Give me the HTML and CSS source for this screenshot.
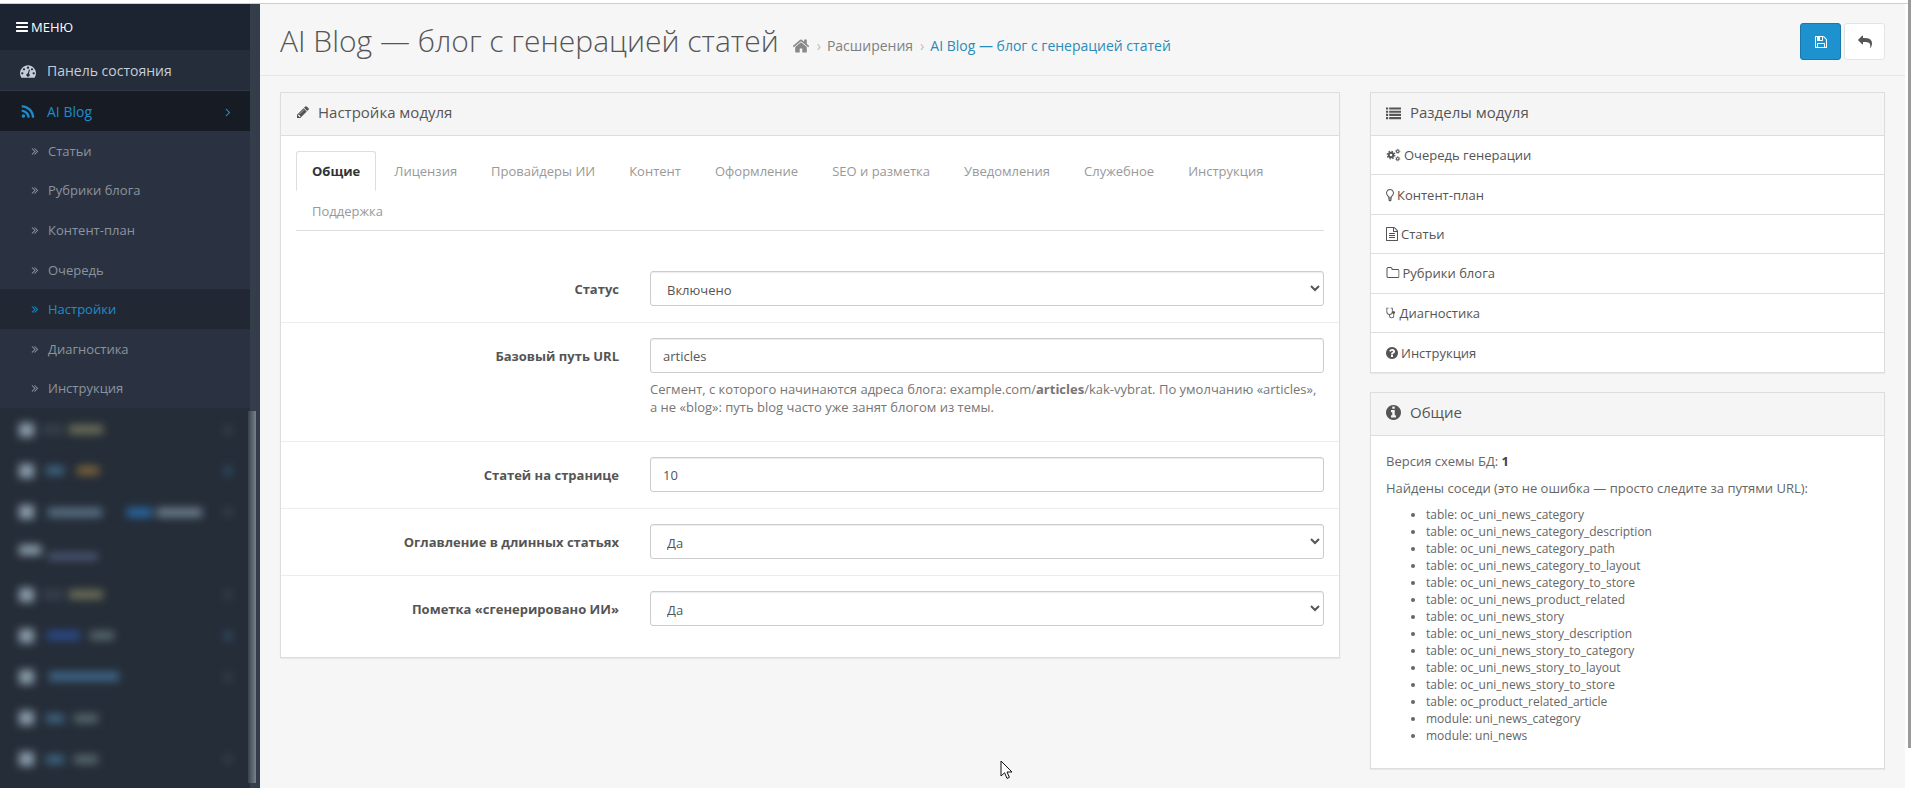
FILE: index.html
```html
<!DOCTYPE html>
<html lang="ru">
<head>
    <meta charset="UTF-8">
    <title>AI Blog — блог с генерацией статей</title>
    <link rel="stylesheet" href="styles.css">
</head>
<body>
    <svg class="sprites" xmlns="http://www.w3.org/2000/svg">
        <symbol id="i-bars" viewBox="0 0 1792 1792"><path d="M1664 1344v128q0 26-19 45t-45 19h-1408q-26 0-45-19t-19-45v-128q0-26 19-45t45-19h1408q26 0 45 19t19 45zm0-512v128q0 26-19 45t-45 19h-1408q-26 0-45-19t-19-45v-128q0-26 19-45t45-19h1408q26 0 45 19t19 45zm0-512v128q0 26-19 45t-45 19h-1408q-26 0-45-19t-19-45v-128q0-26 19-45t45-19h1408q26 0 45 19t19 45z"/></symbol>
        <symbol id="i-dash" viewBox="0 0 1792 1792"><path d="M384 1152q0-53-37.5-90.5t-90.5-37.5-90.5 37.5-37.5 90.5 37.5 90.5 90.5 37.5 90.5-37.5 37.5-90.5zm192-448q0-53-37.5-90.5t-90.5-37.5-90.5 37.5-37.5 90.5 37.5 90.5 90.5 37.5 90.5-37.5 37.5-90.5zm428 481l101-382q6-26-7.5-48.5t-38.5-29.5-48 6.5-30 39.5l-101 382q-60 5-107 43.5t-63 98.5q-20 77 20 146t117 89 146-20 89-117q16-60-6-117t-72-91zm660-33q0-53-37.5-90.5t-90.5-37.5-90.5 37.5-37.5 90.5 37.5 90.5 90.5 37.5 90.5-37.5 37.5-90.5zm-640-640q0-53-37.5-90.5t-90.5-37.5-90.5 37.5-37.5 90.5 37.5 90.5 90.5 37.5 90.5-37.5 37.5-90.5zm448 192q0-53-37.5-90.5t-90.5-37.5-90.5 37.5-37.5 90.5 37.5 90.5 90.5 37.5 90.5-37.5 37.5-90.5zm320 448q0 261-141 483-19 29-54 29h-1402q-35 0-54-29-141-221-141-483 0-182 71-348t191-286 286-191 348-71 348 71 286 191 191 286 71 348z"/></symbol>
        <symbol id="i-rss" viewBox="0 0 1792 1792"><path d="M576 1344q0 80-56 136t-136 56-136-56-56-136 56-136 136-56 136 56 56 136zm512 123q2 28-17 48-18 21-47 21h-135q-25 0-43-16.5t-20-41.5q-22-229-184.5-391.5t-391.5-184.5q-25-2-41.5-20t-16.5-43v-135q0-29 21-47 17-17 43-17h5q160 13 306 80.5t259 181.5q114 113 181.5 259t80.5 306zm512 2q2 27-18 47-18 20-46 20h-143q-26 0-44.5-17.5t-19.5-42.5q-12-215-101-408.5t-231.5-336-336-231.5-408.5-102q-25-1-42.5-19.5t-17.5-43.5v-143q0-28 20-46 18-18 44-18h3q262 13 501.5 120t425.5 294q187 186 294 425.5t120 501.5z"/></symbol>
        <symbol id="i-angle" viewBox="0 0 1792 1792"><path d="M1171 960q0 13-10 23l-466 466q-10 10-23 10t-23-10l-50-50q-10-10-10-23t10-23l393-393-393-393q-10-10-10-23t10-23l50-50q10-10 23-10t23 10l466 466q10 10 10 23z"/></symbol>
        <symbol id="i-double" viewBox="0 0 1792 1792"><path d="M979 960q0 13-10 23l-466 466q-10 10-23 10t-23-10l-50-50q-10-10-10-23t10-23l393-393-393-393q-10-10-10-23t10-23l50-50q10-10 23-10t23 10l466 466q10 10 10 23zm384 0q0 13-10 23l-466 466q-10 10-23 10t-23-10l-50-50q-10-10-10-23t10-23l393-393-393-393q-10-10-10-23t10-23l50-50q10-10 23-10t23 10l466 466q10 10 10 23z"/></symbol>
        <symbol id="i-home" viewBox="0 0 1792 1792"><path d="M1472 992v480q0 26-19 45t-45 19h-384v-384h-256v384h-384q-26 0-45-19t-19-45v-480q0-1 .5-3t.5-3l575-474 575 474q1 2 1 6zm223-69l-62 74q-8 9-21 11h-3q-13 0-21-7l-692-577-692 577q-12 8-24 7-13-2-21-11l-62-74q-8-10-7-23.5t11-21.5l719-599q32-26 76-26t76 26l244 204v-195q0-14 9-23t23-9h192q14 0 23 9t9 23v408l219 182q10 8 11 21.5t-7 23.5z"/></symbol>
        <symbol id="i-save" viewBox="0 0 1792 1792"><path d="M512 1536h768v-384h-768v384zm896 0h128v-896q0-14-10-38.5t-20-34.5l-281-281q-10-10-34-20t-39-10v416q0 40-28 68t-68 28h-576q-40 0-68-28t-28-68v-416h-128v1280h128v-416q0-40 28-68t68-28h832q40 0 68 28t28 68v416zm-384-928v-320q0-13-9.5-22.5t-22.5-9.5h-192q-13 0-22.5 9.5t-9.5 22.5v320q0 13 9.5 22.5t22.5 9.5h192q13 0 22.5-9.5t9.5-22.5zm640 32v928q0 40-28 68t-68 28h-1344q-40 0-68-28t-28-68v-1344q0-40 28-68t68-28h928q40 0 88 20t76 48l280 280q28 28 48 76t20 88z"/></symbol>
        <symbol id="i-reply" viewBox="0 0 1792 1792"><path d="M1792 1120q0 166-127 451-3 7-10.5 24t-13.5 30-13 22q-12 17-28 17-15 0-23.5-10t-8.5-25q0-9 2.5-26.5t2.5-23.5q5-68 5-123 0-101-17.5-181t-48.5-138.5-80-101-105.5-69.5-133-42.5-154-21.5-175.5-6h-224v256q0 26-19 45t-45 19-45-19l-512-512q-19-19-19-45t19-45l512-512q19-19 45-19t45 19 19 45v256h224q713 0 875 403 53 134 53 333z"/></symbol>
        <symbol id="i-pencil" viewBox="0 0 1792 1792"><path d="M491 1536l91-91-235-235-91 91v107h128v128h107zm523-928q0-22-22-22-10 0-17 7l-542 542q-7 7-7 17 0 22 22 22 10 0 17-7l542-542q7-7 7-17zm-54-192l416 416-832 832h-416v-416zm683 96q0 53-37 90l-166 166-416-416 166-165q36-38 90-38 53 0 91 38l235 234q37 39 37 91z"/></symbol>
        <symbol id="i-list" viewBox="0 0 1792 1792"><path d="M0 288h256v256h-256zM384 288h1408v256h-1408zM0 672h256v256h-256zM384 672h1408v256h-1408zM0 1056h256v256h-256zM384 1056h1408v256h-1408zM0 1440h256v256h-256zM384 1440h1408v256h-1408z"/></symbol>
        <symbol id="i-cogs" viewBox="0 0 1920 1792">
            <circle cx="640" cy="900" r="290" fill="none" stroke="currentColor" stroke-width="240"/>
            <circle cx="640" cy="900" r="490" fill="none" stroke="currentColor" stroke-width="150" stroke-dasharray="192 193"/>
            <circle cx="1500" cy="420" r="170" fill="none" stroke="currentColor" stroke-width="130"/>
            <circle cx="1500" cy="1380" r="170" fill="none" stroke="currentColor" stroke-width="130"/>
            <circle cx="1500" cy="420" r="270" fill="none" stroke="currentColor" stroke-width="90" stroke-dasharray="106 106"/>
            <circle cx="1500" cy="1380" r="270" fill="none" stroke="currentColor" stroke-width="90" stroke-dasharray="106 106"/>
        </symbol>
        <symbol id="i-bulb" viewBox="384 0 1024 1792"><path d="M896 128a500 500 0 0 0-360 850c70 75 105 130 120 270h480c15-140 50-195 120-270a500 500 0 0 0-360-850zm0 128a372 372 0 0 1 270 630c-70 75-115 140-140 234h-260c-25-94-70-159-140-234a372 372 0 0 1 270-630zM660 1310h472v120h-472zM700 1470h392v110l-100 110h-192l-100-110z" fill-rule="evenodd"/></symbol>
        <symbol id="i-file" viewBox="128 0 1536 1792"><path d="M1596 380q28 28 48 76t20 88v1152q0 40-28 68t-68 28h-1344q-40 0-68-28t-28-68v-1600q0-40 28-68t68-28h896q40 0 88 20t76 48zm-444-244v376h376q-10-29-22-41l-313-313q-12-12-41-22zm384 1528v-1024h-416q-40 0-68-28t-28-68v-416h-768v1536h1280zm-1024-864q0-14 9-23t23-9h704q14 0 23 9t9 23v64q0 14-9 23t-23 9h-704q-14 0-23-9t-9-23v-64zm736 224q14 0 23 9t9 23v64q0 14-9 23t-23 9h-704q-14 0-23-9t-9-23v-64q0-14 9-23t23-9h704zm0 256q14 0 23 9t9 23v64q0 14-9 23t-23 9h-704q-14 0-23-9t-9-23v-64q0-14 9-23t23-9h704z"/></symbol>
        <symbol id="i-folder" viewBox="0 0 1728 1792"><path d="M1600 1312v-704q0-40-28-68t-68-28h-704q-40 0-68-28t-28-68v-64q0-40-28-68t-68-28h-320q-40 0-68 28t-28 68v960q0 40 28 68t68 28h1216q40 0 68-28t28-68zm128-704v704q0 92-66 158t-158 66h-1216q-92 0-158-66t-66-158v-960q0-92 66-158t158-66h320q92 0 158 66t66 158v32h672q92 0 158 66t66 158z"/></symbol>
        <symbol id="i-steth" viewBox="120 100 1500 1700"><path d="M180 190h300v120h-180v470a330 330 0 0 0 660 0v-470h-180v-120h300v590a450 450 0 0 1-390 446v130a240 240 0 0 0 480 0v-300a190 190 0 1 1 120 0v300a360 360 0 0 1-720 0v-130a450 450 0 0 1-390-446z"/></symbol>
        <symbol id="i-help" viewBox="128 128 1536 1536"><path d="M1024 1376v-192q0-14-9-23t-23-9h-192q-14 0-23 9t-9 23v192q0 14 9 23t23 9h192q14 0 23-9t9-23zm256-672q0-88-55.5-163t-138.5-116-170-41q-243 0-371 213-15 24 8 42l132 100q7 6 19 6 16 0 25-12 53-68 86-92 34-24 86-24 48 0 85.5 26t37.5 59q0 38-20 61t-68 45q-63 28-115.5 86.5t-52.5 125.5v36q0 14 9 23t23 9h192q14 0 23-9t9-23q0-19 21.5-49.5t54.5-49.5q32-18 49-28.5t46-35 44.5-48 28-60.5 12.5-81zm384 192q0 209-103 385.5t-279.5 279.5-385.5 103-385.5-103-279.5-279.5-103-385.5 103-385.5 279.5-279.5 385.5-103 385.5 103 279.5 279.5 103 385.5z"/></symbol>
        <symbol id="i-info" viewBox="128 128 1536 1536"><path d="M1152 1376v-160q0-14-9-23t-23-9h-96v-512q0-14-9-23t-23-9h-320q-14 0-23 9t-9 23v160q0 14 9 23t23 9h96v320h-96q-14 0-23 9t-9 23v160q0 14 9 23t23 9h448q14 0 23-9t9-23zm-128-896v-160q0-14-9-23t-23-9h-192q-14 0-23 9t-9 23v160q0 14 9 23t23 9h192q14 0 23-9t9-23zm640 416q0 209-103 385.5t-279.5 279.5-385.5 103-385.5-103-279.5-279.5-103-385.5 103-385.5 279.5-279.5 385.5-103 385.5 103 279.5 279.5 103 385.5z"/></symbol>
    </svg>

    <div class="topline"></div>

    <div class="wrap">
        <nav class="sidebar">
            <div class="menu-head"><svg class="ic"><use href="#i-bars"/></svg>МЕНЮ</div>
            <a class="nav-item"><svg class="ic nav-ic"><use href="#i-dash"/></svg>Панель состояния</a>
            <a class="nav-item nav-open"><svg class="ic nav-ic"><use href="#i-rss"/></svg>AI Blog<svg class="ic nav-caret"><use href="#i-angle"/></svg></a>
            <ul class="subnav">
                <li><svg class="ic"><use href="#i-double"/></svg>Статьи</li>
                <li><svg class="ic"><use href="#i-double"/></svg>Рубрики блога</li>
                <li><svg class="ic"><use href="#i-double"/></svg>Контент-план</li>
                <li><svg class="ic"><use href="#i-double"/></svg>Очередь</li>
                <li class="current"><svg class="ic"><use href="#i-double"/></svg>Настройки</li>
                <li><svg class="ic"><use href="#i-double"/></svg>Диагностика</li>
                <li><svg class="ic"><use href="#i-double"/></svg>Инструкция</li>
            </ul>
            <!-- пункты меню размыты на скриншоте -->
            <div class="hidden-items">
                <div class="hid-row"><i class="blob b-ic"></i><i class="blob b-faint"></i><i class="blob b-olive"></i><i class="blob b-end"></i></div>
                <div class="hid-row"><i class="blob b-ic"></i><i class="blob b-blue"></i><i class="blob b-amber"></i><i class="blob b-end b-end-blue"></i></div>
                <div class="hid-row"><i class="blob b-ic"></i><i class="blob b-long"></i><i class="blob b-vivid"></i><i class="blob b-grey"></i><i class="blob b-end"></i></div>
                <div class="hid-row"><i class="blob b-ic b-ic-wide"></i><i class="blob b-purple"></i></div>
                <div class="hid-row"><i class="blob b-ic"></i><i class="blob b-faint"></i><i class="blob b-olive"></i><i class="blob b-end"></i></div>
                <div class="hid-row"><i class="blob b-ic"></i><i class="blob b-navy"></i><i class="blob b-teal"></i><i class="blob b-end b-end-blue"></i></div>
                <div class="hid-row"><i class="blob b-ic"></i><i class="blob b-wide"></i><i class="blob b-end"></i></div>
                <div class="hid-row"><i class="blob b-ic"></i><i class="blob b-blue"></i><i class="blob b-teal"></i></div>
                <div class="hid-row"><i class="blob b-ic"></i><i class="blob b-blue"></i><i class="blob b-teal"></i><i class="blob b-end"></i></div>
            </div>
            <div class="side-scroll"></div>
        </nav>

        <main class="content">
            <header class="page-head">
                <div class="head-left">
                    <h1>AI Blog — блог с генерацией статей</h1>
                    <ul class="crumbs">
                        <li><svg class="ic"><use href="#i-home"/></svg></li>
                        <li>Расширения</li>
                        <li class="crumb-now">AI Blog — блог с генерацией статей</li>
                    </ul>
                </div>
                <div class="head-btns">
                    <button class="btn btn-save"><svg class="ic"><use href="#i-save"/></svg></button>
                    <button class="btn btn-back"><svg class="ic"><use href="#i-reply"/></svg></button>
                </div>
            </header>

            <div class="columns">
                <section class="panel panel-main">
                    <div class="panel-head"><svg class="ic"><use href="#i-pencil"/></svg>Настройка модуля</div>
                    <div class="panel-body">
                        <ul class="tabs">
                            <li class="active">Общие</li>
                            <li>Лицензия</li>
                            <li>Провайдеры ИИ</li>
                            <li>Контент</li>
                            <li>Оформление</li>
                            <li>SEO и разметка</li>
                            <li>Уведомления</li>
                            <li>Служебное</li>
                            <li>Инструкция</li>
                            <li>Поддержка</li>
                        </ul>
                        <form class="form">
                            <div class="row">
                                <label>Статус</label>
                                <div class="field"><select><option>Включено</option></select></div>
                            </div>
                            <div class="row">
                                <label>Базовый путь URL</label>
                                <div class="field">
                                    <input type="text" value="articles">
                                    <p class="help">Сегмент, с которого начинаются адреса блога: example.com/<b>articles</b>/kak-vybrat. По умолчанию «articles», а не «blog»: путь blog часто уже занят блогом из темы.</p>
                                </div>
                            </div>
                            <div class="row">
                                <label>Статей на странице</label>
                                <div class="field"><input type="text" value="10"></div>
                            </div>
                            <div class="row">
                                <label>Оглавление в длинных статьях</label>
                                <div class="field"><select><option>Да</option></select></div>
                            </div>
                            <div class="row">
                                <label>Пометка «сгенерировано ИИ»</label>
                                <div class="field"><select><option>Да</option></select></div>
                            </div>
                        </form>
                    </div>
                </section>

                <aside class="side-col">
                    <section class="panel">
                        <div class="panel-head head-wide"><svg class="ic"><use href="#i-list"/></svg>Разделы модуля</div>
                        <div class="links">
                            <a><svg class="ic w-cogs"><use href="#i-cogs"/></svg>Очередь генерации</a>
                            <a><svg class="ic w-bulb"><use href="#i-bulb"/></svg>Контент-план</a>
                            <a><svg class="ic w-file"><use href="#i-file"/></svg>Статьи</a>
                            <a><svg class="ic w-folder"><use href="#i-folder"/></svg>Рубрики блога</a>
                            <a><svg class="ic w-steth"><use href="#i-steth"/></svg>Диагностика</a>
                            <a><svg class="ic w-help"><use href="#i-help"/></svg>Инструкция</a>
                        </div>
                    </section>
                    <section class="panel">
                        <div class="panel-head head-wide"><svg class="ic"><use href="#i-info"/></svg>Общие</div>
                        <div class="info-body">
                            <p>Версия схемы БД: <b>1</b></p>
                            <p>Найдены соседи (это не ошибка — просто следите за путями URL):</p>
                            <ul>
                                <li>table: oc_uni_news_category</li>
                                <li>table: oc_uni_news_category_description</li>
                                <li>table: oc_uni_news_category_path</li>
                                <li>table: oc_uni_news_category_to_layout</li>
                                <li>table: oc_uni_news_category_to_store</li>
                                <li>table: oc_uni_news_product_related</li>
                                <li>table: oc_uni_news_story</li>
                                <li>table: oc_uni_news_story_description</li>
                                <li>table: oc_uni_news_story_to_category</li>
                                <li>table: oc_uni_news_story_to_layout</li>
                                <li>table: oc_uni_news_story_to_store</li>
                                <li>table: oc_product_related_article</li>
                                <li>module: uni_news_category</li>
                                <li>module: uni_news</li>
                            </ul>
                        </div>
                    </section>
                </aside>
            </div>
        </main>
        <div class="page-scroll"><div class="page-thumb"></div></div>
    </div>

    <svg class="cursor" width="14" height="20" viewBox="0 0 14 20"><path d="M1 1v15l3.6-3.2 2.4 5.6 2.4-1-2.4-5.4h5z" fill="#fff" stroke="#111" stroke-width="1"/></svg>
</body>
</html>
```

FILE: styles.css
```css
* {
    box-sizing: border-box;
}

html, body {
    height: 100%;
    margin: 0;
    overflow: hidden;
}

body {
    background-color: #f6f6f6;
    color: #666;
    font-family: "Open Sans", sans-serif;
    font-size: 12px;
    line-height: 18px;
}

ul {
    list-style: none;
    margin: 0;
    padding: 0;
}

.sprites {
    display: none;
}

.ic {
    width: 14px;
    height: 14px;
    fill: currentColor;
    flex: none;
}

.topline {
    height: 4px;
    background-color: #fff;
    border-bottom: 1px solid #cfcfcf;
}

.wrap {
    display: flex;
    height: calc(100% - 4px);
}

/* left menu */
.sidebar {
    position: relative;
    width: 260px;
    flex: none;
    background-color: #343d4a;
    padding-right: 10px;
    overflow: hidden;
}

.menu-head {
    display: flex;
    align-items: center;
    height: 46px;
    padding-left: 15px;
    background-color: #1c2431;
    color: #fff;
    font-size: 13px;
}

.menu-head .ic {
    margin-right: 2px;
}

.nav-item {
    display: flex;
    align-items: center;
    height: 41px;
    padding: 1px 0 0 20px;
    background-color: #252d3a;
    border-bottom: 1px solid #303946;
    color: #c5ced8;
    font-size: 14px;
}

.nav-ic {
    width: 16px;
    height: 16px;
    margin-right: 11px;
}

.nav-open {
    height: 40px;
    padding-top: 2px;
    background-color: #171b23;
    border-bottom: none;
    color: #1d8ccb;
}

.nav-caret {
    margin-left: auto;
    margin-right: 15px;
}

.subnav {
    background-color: #2a3241;
}

.subnav li {
    display: flex;
    align-items: center;
    height: 39.6px;
    padding-left: 29px;
    color: #8b949e;
    font-size: 13px;
}

.subnav .ic {
    width: 12px;
    height: 12px;
    margin-right: 7px;
}

.subnav .current {
    background-color: #222833;
    color: #1d8ccb;
}

.hidden-items {
    background-color: #252d38;
    height: 400px;
    padding-top: 1px;
}

.hid-row {
    display: flex;
    align-items: center;
    height: 41.2px;
    padding-left: 19px;
    filter: blur(4px);
}

.blob {
    display: block;
    flex: none;
    height: 9px;
    background-color: #5a6f85;
}

.b-ic { width: 15px; height: 14px; background-color: #8a9cab; }
.b-ic-wide { width: 22px; height: 10px; margin-top: -6px; }
.b-faint { width: 20px; margin-left: 9px; background-color: #37424e; }
.b-olive { width: 34px; margin-left: 6px; background-color: #6d7058; }
.b-blue { width: 18px; margin-left: 12px; background-color: #3f6480; }
.b-amber { width: 22px; margin-left: 13px; background-color: #7a623c; }
.b-long { width: 54px; margin-left: 14px; background-color: #5b7186; }
.b-vivid { width: 25px; margin-left: 25px; background-color: #2a6aa6; }
.b-grey { width: 45px; margin-left: 5px; background-color: #6e7f8e; }
.b-purple { width: 50px; height: 7px; margin-left: 7px; margin-top: 6px; background-color: #4e5a78; }
.b-navy { width: 33px; margin-left: 13px; background-color: #2c4a8c; }
.b-teal { width: 24px; margin-left: 10px; background-color: #56676c; }
.b-wide { width: 70px; margin-left: 15px; background-color: #40688a; }

.b-end {
    margin-left: auto;
    margin-right: 18px;
    width: 8px;
    height: 10px;
    background-color: #353e4a;
}

.b-end-blue {
    background-color: #2e4a5e;
}

.side-scroll {
    position: absolute;
    top: 407px;
    bottom: 5px;
    left: 248px;
    width: 8px;
    background: linear-gradient(to right, #38424e, #78828d);
}

/* page */
.content {
    flex: 1;
    min-width: 0;
}

.page-head {
    display: flex;
    justify-content: space-between;
    height: 72px;
    padding: 19px 20px 0;
    border-bottom: 1px solid #e6e6e6;
}

.head-left {
    display: flex;
    align-items: flex-start;
}

h1 {
    margin: 0 13px 0 0;
    color: #555;
    font-size: 30px;
    font-weight: 300;
    line-height: 36px;
}

.crumbs {
    display: flex;
    align-items: center;
    height: 36px;
    padding-top: 10px;
    color: #808080;
    font-size: 14px;
}

.crumbs li + li::before {
    content: "›";
    margin: 0 6px 0 7px;
    color: #bbb;
}

.crumbs .ic {
    width: 18px;
    height: 18px;
    display: block;
    color: #888;
}

.crumb-now {
    color: #2a8bb8;
}

.head-btns {
    display: flex;
    gap: 3px;
}

.btn {
    display: flex;
    align-items: center;
    justify-content: center;
    width: 41px;
    height: 37px;
    padding: 0;
    border: 1px solid #e4e4e4;
    border-radius: 3px;
    background-color: #fff;
    color: #555;
}

.btn-save {
    background-color: #1e91cf;
    border-color: #1978ab;
    color: #fff;
}

.columns {
    display: flex;
    align-items: flex-start;
    gap: 30px;
    padding: 16px 20px 0;
}

.panel {
    background-color: #fff;
    border: 1px solid #ddd;
    box-shadow: 0 1px 1px rgba(0,0,0,0.05);
}

.panel-main {
    flex: 1;
    min-width: 0;
}

.side-col {
    display: flex;
    flex-direction: column;
    gap: 19px;
    width: 515px;
    flex: none;
}

.panel-head {
    display: flex;
    align-items: center;
    height: 43px;
    padding: 0 0 4px 15px;
    background-color: #f5f5f5;
    border-bottom: 1px solid #ddd;
    color: #555;
    font-size: 15px;
}

.panel-head .ic {
    width: 14px;
    height: 14px;
    margin-right: 8px;
}

.head-wide .ic {
    width: 15px;
    height: 15px;
    margin-right: 9px;
}

.panel-body {
    padding: 15px;
}

.tabs {
    display: flex;
    flex-wrap: wrap;
    border-bottom: 1px solid #ddd;
    margin-bottom: 25px;
    font-size: 13px;
}

.tabs li {
    height: 39.5px;
    padding: 10px 15px;
    margin-right: 2px;
    border: 1px solid transparent;
    color: #999;
}

.tabs .active {
    border-color: #ddd;
    border-bottom-color: #fff;
    border-radius: 3px 3px 0 0;
    color: #333;
    font-weight: 700;
}

.form {
    margin: 0 -15px;
}

.row {
    display: flex;
    padding: 15px 15px 16px;
    border-top: 1px solid #ededed;
}

.row:first-child {
    border-top: none;
}

.row label {
    width: 323px;
    flex: none;
    padding-top: 9px;
    margin-right: 31px;
    color: #555;
    font-weight: 700;
    font-size: 13px;
    text-align: right;
}

.field {
    flex: 1;
    min-width: 0;
}

.field input,
.field select {
    display: block;
    width: 100%;
    height: 35px;
    padding: 8px 12px;
    border: 1px solid #ccc;
    border-radius: 3px;
    background-color: #fff;
    box-shadow: inset 0 1px 1px rgba(0,0,0,0.075);
    color: #555;
    font-family: inherit;
    font-size: 13px;
}

.help {
    margin: 7px 0 9px;
    color: #767676;
    font-size: 13px;
}

.links a {
    display: flex;
    align-items: center;
    height: 39.4px;
    padding-left: 15px;
    border-bottom: 1px solid #ddd;
    color: #555;
    font-size: 13px;
}

.links a:last-child {
    border-bottom: none;
}

.links .ic {
    height: 14px;
    margin-right: 3px;
}

.links .w-cogs { width: 15px; }
.links .w-bulb { width: 8px; }
.links .w-file { width: 12px; }
.links .w-folder { width: 13.5px; }
.links .w-steth { width: 10.5px; }
.links .w-help { width: 12px; height: 12px; }

.info-body {
    padding: 16px 15px 24px;
    font-size: 13px;
    color: #666;
}

.info-body p {
    margin: 0 0 9px;
}

.info-body b {
    color: #444;
}

.info-body ul {
    list-style: disc;
    padding-left: 40px;
    font-size: 12px;
}

.info-body li {
    height: 17px;
    line-height: 17px;
}

.page-scroll {
    width: 6px;
    flex: none;
    padding-left: 3px;
    background-color: #fff;
}

.page-thumb {
    height: 748px;
    margin-top: -4px;
    background-color: #9a9a9a;
}

.cursor {
    position: absolute;
    left: 1000px;
    top: 760px;
}
```
